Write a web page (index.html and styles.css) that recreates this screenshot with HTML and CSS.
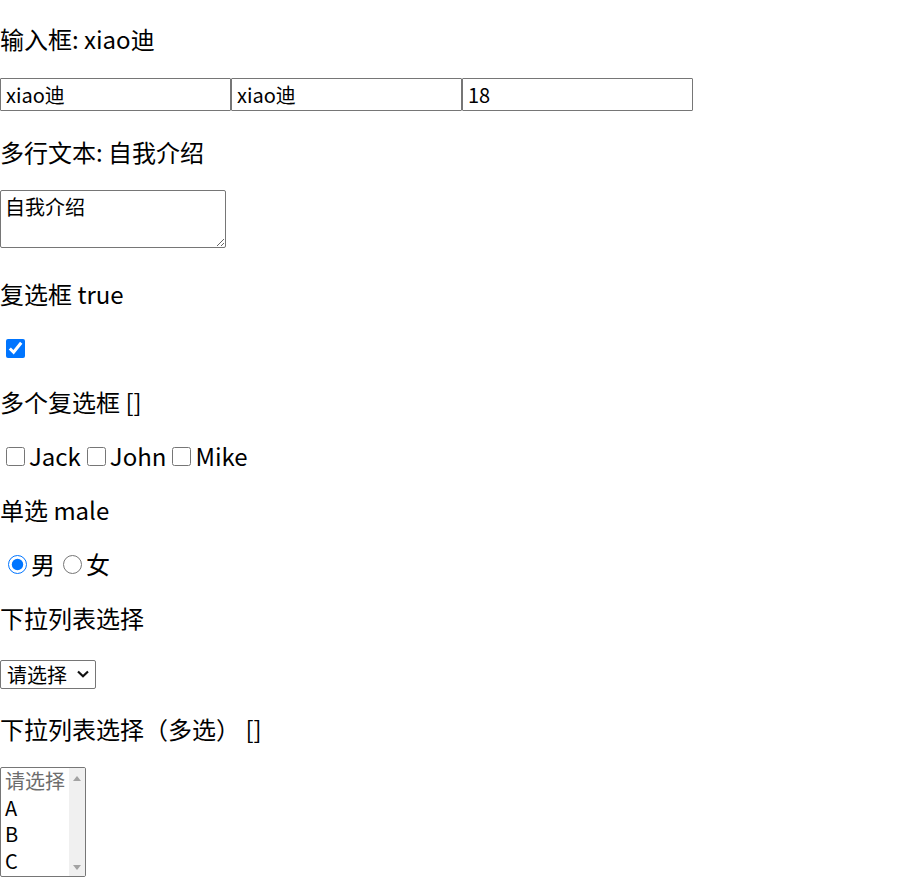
FILE: index.html
```html
<!DOCTYPE html>
<html lang="zh-CN">
<head>
<meta charset="utf-8">
<title>表单</title>
<link rel="stylesheet" href="styles.css">
</head>
<body>
<div class="app">
  <p class="title">输入框: xiao迪</p>
  <div class="row row-inputs"><input class="text-input" type="text" value="xiao迪"><input class="text-input" type="text" value="xiao迪"><input class="text-input" type="text" value="18"></div>
  <p class="title">多行文本: 自我介绍</p>
  <div class="row row-textarea"><textarea class="intro">自我介绍</textarea></div>
  <p class="title">复选框 true</p>
  <p class="title line"><input class="check" type="checkbox" checked></p>
  <p class="title">多个复选框 []</p>
  <p class="title line"><input class="check" type="checkbox" id="c1"><label for="c1">Jack</label><input class="check" type="checkbox" id="c2"><label for="c2">John</label><input class="check" type="checkbox" id="c3"><label for="c3">Mike</label></p>
  <p class="title">单选 male</p>
  <p class="title line"><input class="radio" type="radio" name="sex" id="r1" checked><label for="r1">男</label><input class="radio" type="radio" name="sex" id="r2"><label for="r2">女</label></p>
  <p class="title">下拉列表选择</p>
  <div class="row row-select">
    <div class="select-wrap">
      <select class="single"><option value="" disabled selected>请选择</option><option>A</option><option>B</option><option>C</option></select>
      <svg class="chevron" width="12" height="8" viewBox="0 0 12 8" aria-hidden="true"><path d="M1 1.5 L6 6.3 L11 1.5" fill="none" stroke="#111111" stroke-width="2.2"/></svg>
    </div>
  </div>
  <p class="title">下拉列表选择（多选） []</p>
  <div class="row row-multi">
    <div class="listbox" role="listbox" aria-multiselectable="true">
      <div class="options">
        <div class="opt opt-disabled" role="option">请选择</div>
        <div class="opt" role="option">A</div>
        <div class="opt" role="option">B</div>
        <div class="opt" role="option">C</div>
      </div>
      <div class="scrollbar">
        <svg width="8" height="5" viewBox="0 0 8 5" aria-hidden="true"><path d="M0 5 L4 0 L8 5 Z" fill="#a3a3a3"/></svg>
        <svg width="8" height="5" viewBox="0 0 8 5" aria-hidden="true"><path d="M0 0 L4 5 L8 0 Z" fill="#a3a3a3"/></svg>
      </div>
    </div>
  </div>
</div>
</body>
</html>
```
FILE: styles.css
```css
html, body {
  margin: 0;
  padding: 0;
  background: #ffffff;
}

body {
  font-family: "Noto Sans CJK SC", "Noto Sans", sans-serif;
  color: #000000;
}

.app {
  display: flow-root;
}

.title {
  margin: 24px 0;
  font-size: 24px;
  line-height: 30px;
}

.line {
  display: flex;
  align-items: center;
  height: 30px;
}

.row {
  display: flex;
  align-items: flex-start;
}

.row-inputs {
  height: 35px;
}

.text-input {
  box-sizing: border-box;
  width: 231px;
  height: 33px;
  margin: 0;
  padding: 0 5px;
  border: 1px solid #767676;
  border-radius: 1px;
  font-family: "Noto Sans CJK SC", "Noto Sans", sans-serif;
  font-size: 20px;
  color: #000000;
  background: #ffffff;
}

.row-textarea {
  height: 64px;
}

.intro {
  box-sizing: border-box;
  width: 226px;
  height: 58px;
  margin: -1px 0 0 0;
  padding: 5px 4px;
  border: 1px solid #767676;
  border-radius: 2px;
  font-family: "Noto Sans CJK SC", "Noto Sans", sans-serif;
  font-size: 20px;
  line-height: 22px;
  color: #000000;
}

.check {
  width: 19px;
  height: 19px;
  margin: 0 4px 0 6px;
}

.radio {
  width: 19px;
  height: 19px;
  margin: 0 4px 0 8px;
}

.row-select {
  height: 33px;
  padding-top: 3px;
  box-sizing: border-box;
}

.select-wrap {
  position: relative;
  width: 96px;
  height: 29px;
}

.single {
  appearance: none;
  -webkit-appearance: none;
  box-sizing: border-box;
  width: 96px;
  height: 29px;
  margin: 0;
  padding: 0 0 0 6px;
  font-family: "Noto Sans CJK SC", "Noto Sans", sans-serif;
  font-size: 20px;
  line-height: 27px;
  color: #000000;
  border: 1px solid #767676;
  border-radius: 2px;
  background: #ffffff;
}

.chevron {
  position: absolute;
  left: 77px;
  top: 10px;
  pointer-events: none;
}

.row-multi {
  padding-top: 23px;
  margin-top: -24px;
}

.listbox {
  box-sizing: border-box;
  display: flex;
  width: 86px;
  height: 110px;
  border: 1.5px solid #767676;
  border-radius: 2px;
  background: #ffffff;
  overflow: hidden;
}

.options {
  flex: 1;
  padding-top: 0;
}

.opt {
  padding: 0 0 0 4px;
  font-size: 20px;
  line-height: 26.5px;
  height: 26.5px;
  white-space: nowrap;
  color: #000000;
}

.opt-disabled {
  color: #6d6d6d;
}

.scrollbar {
  width: 16px;
  flex: none;
  background: #f0f0f0;
  display: flex;
  flex-direction: column;
  justify-content: space-between;
  align-items: center;
  padding: 8px 0 6px;
}

.scrollbar svg {
  display: block;
}
```
